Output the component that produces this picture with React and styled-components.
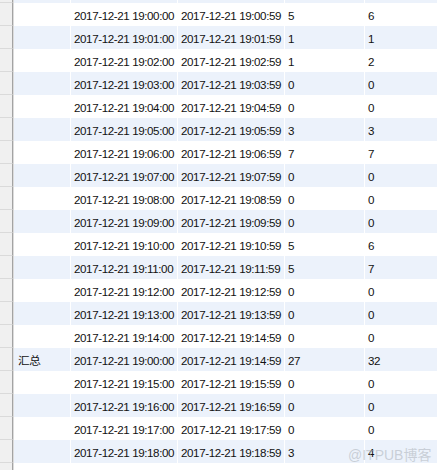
import React from "react";
import styled, { createGlobalStyle } from "styled-components";

const Global = createGlobalStyle`
  html, body { margin: 0; padding: 0; background: #fff; }
  body { width: 438px; height: 470px; overflow: hidden; }
  #root { width: 438px; height: 470px; }
`;

const Viewport = styled.div`
  position: relative;
  width: 438px;
  height: 470px;
  overflow: hidden;
  background: #fff;
  font-family: "Liberation Sans", "Noto Sans CJK SC", sans-serif;
  font-size: 11.6px;
  letter-spacing: -0.4px;
  color: #111;
`;

const List = styled.div`
  margin-top: -20px;
  display: flex;
  flex-direction: column;
`;

const Row = styled.div`
  display: grid;
  grid-template-columns: 13px 58px 107px 107px 80px 1fr;
  height: 23px;
  background: ${(p) => (p.$alt ? "#ecf2fb" : "#ffffff")};
`;

const Gutter = styled.div`
  background: #f0f0f0;
  border-right: 1px solid #a3a3a3;
  border-bottom: 1px solid #dadada;
  box-sizing: border-box;
`;

const Cell = styled.div`
  display: flex;
  align-items: center;
  padding-left: ${(p) => (p.$first ? "4px" : "3px")};
  padding-top: 1px;
  border-right: 1px solid #ffffff;
  border-left: ${(p) => (p.$first ? "1px solid #dcdcdc" : "none")};
  box-sizing: border-box;
  white-space: nowrap;
  overflow: hidden;
`;

const Watermark = styled.div`
  position: absolute;
  left: 348px;
  top: 444px;
  font-size: 14px;
  letter-spacing: 0;
  color: rgba(170, 176, 184, 0.55);
  pointer-events: none;
`;

const pad = (n) => String(n).padStart(2, "0");

const minuteRow = (h, m, a, b) => ({
  label: "",
  start: `2017-12-21 ${pad(h)}:${pad(m)}:00`,
  end: `2017-12-21 ${pad(h)}:${pad(m)}:59`,
  a,
  b,
});

const blankRow = { label: "", start: "", end: "", a: "", b: "" };

const rows = [
  blankRow,
  minuteRow(19, 0, 5, 6),
  minuteRow(19, 1, 1, 1),
  minuteRow(19, 2, 1, 2),
  minuteRow(19, 3, 0, 0),
  minuteRow(19, 4, 0, 0),
  minuteRow(19, 5, 3, 3),
  minuteRow(19, 6, 7, 7),
  minuteRow(19, 7, 0, 0),
  minuteRow(19, 8, 0, 0),
  minuteRow(19, 9, 0, 0),
  minuteRow(19, 10, 5, 6),
  minuteRow(19, 11, 5, 7),
  minuteRow(19, 12, 0, 0),
  minuteRow(19, 13, 0, 0),
  minuteRow(19, 14, 0, 0),
  {
    label: "汇总",
    start: "2017-12-21 19:00:00",
    end: "2017-12-21 19:14:59",
    a: 27,
    b: 32,
  },
  minuteRow(19, 15, 0, 0),
  minuteRow(19, 16, 0, 0),
  minuteRow(19, 17, 0, 0),
  minuteRow(19, 18, 3, 4),
  minuteRow(19, 19, 1, 1),
];

export default function App() {
  return (
    <>
      <Global />
      <Viewport>
        <List>
          {rows.map((r, i) => (
            <Row key={i} $alt={i % 2 === 0}>
              <Gutter />
              <Cell $first>{r.label}</Cell>
              <Cell>{r.start}</Cell>
              <Cell>{r.end}</Cell>
              <Cell>{r.a}</Cell>
              <Cell>{r.b}</Cell>
            </Row>
          ))}
        </List>
        <Watermark>@ITPUB博客</Watermark>
      </Viewport>
    </>
  );
}
